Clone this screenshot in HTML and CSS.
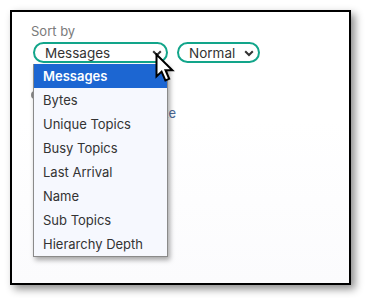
FILE: index.html
```html
<!DOCTYPE html>
<html>
<head>
<meta charset="utf-8">
<link rel="stylesheet" href="styles.css">
</head>
<body>
<div class="frame">
  <div class="label">Sort by</div>
  <div class="selects">
    <div class="select sel-sort">
      <span>Messages</span>
      <svg class="chev" width="10" height="7" viewBox="0 0 10 7"><path d="M1.2 1.2 L5 5 L8.8 1.2" fill="none" stroke="#333" stroke-width="2"/></svg>
    </div>
    <div class="select sel-order">
      <span>Normal</span>
      <svg class="chev" width="10" height="7" viewBox="0 0 10 7"><path d="M1.2 1.2 L5 5 L8.8 1.2" fill="none" stroke="#333" stroke-width="2"/></svg>
    </div>
  </div>
  <div class="behind">
    <div class="radio"></div>
    <div class="hint">Size</div>
  </div>
  <ul class="menu">
    <li class="active">Messages</li>
    <li>Bytes</li>
    <li>Unique Topics</li>
    <li>Busy Topics</li>
    <li>Last Arrival</li>
    <li>Name</li>
    <li>Sub Topics</li>
    <li>Hierarchy Depth</li>
  </ul>
  <svg class="cursor" width="22" height="31" viewBox="0 0 22 31">
    <path d="M1.5 1.5 L1.5 23.5 L6.6 18.6 L10.4 27.4 L14.2 25.8 L10.5 17.2 L17.4 17.2 Z" fill="#fff" stroke="#000" stroke-width="2" stroke-linejoin="miter"/>
  </svg>
</div>
</body>
</html>
```
FILE: styles.css
```css
* { box-sizing: border-box; }
html, body { margin: 0; padding: 0; background: #fff; }
body {
  width: 365px;
  height: 298px;
  overflow: hidden;
  font-family: Inter, "Noto Sans", sans-serif;
}
.frame {
  position: relative;
  margin: 10px 0 0 10px;
  width: 341px;
  height: 275px;
  border: 2px solid #000;
  background: linear-gradient(180deg, #fff 40%, #fbfbfd 100%);
  box-shadow: 4px 4px 8px rgba(0,0,0,0.45);
  padding: 11px 0 0 21px;
}
.label {
  font-size: 13px;
  color: #7a7a7a;
  line-height: 16px;
  margin-left: -2px;
}
.selects {
  display: flex;
  gap: 9px;
  margin-top: 3px;
}
.select {
  height: 21px;
  border: 2px solid #12a58a;
  border-radius: 11px;
  background: #fff;
  display: flex;
  align-items: center;
  justify-content: space-between;
  padding: 0 4px 0 10px;
  font-size: 13.5px;
  color: #333;
}
.sel-sort { width: 135px; }
.sel-order { width: 83px; }
.chev { display: block; margin-top: 1px; }
.behind {
  margin-top: 28px;
  position: relative;
  height: 40px;
}
.radio {
  width: 8px;
  height: 8px;
  border-radius: 50%;
  background: #888;
  margin-left: -2px;
}
.hint {
  position: absolute;
  left: 0;
  top: 14px;
  width: 143px;
  text-align: right;
  font-size: 13px;
  color: #4b6a9a;
}
.menu {
  position: absolute;
  left: 21px;
  top: 52px;
  width: 135px;
  margin: 0;
  padding: 0;
  list-style: none;
  background: #f6f8fe;
  border: 1px solid #8a8a8a;
  border-top: none;
  box-shadow: 2px 3px 5px rgba(0,0,0,0.35);
}
.menu li {
  height: 24px;
  line-height: 24px;
  padding-left: 9px;
  font-size: 13px;
  color: #333;
}
.menu li.active {
  background: #1c66d2;
  color: #fff;
  font-weight: 600;
}
.cursor {
  position: absolute;
  left: 143px;
  top: 41px;
}
```
